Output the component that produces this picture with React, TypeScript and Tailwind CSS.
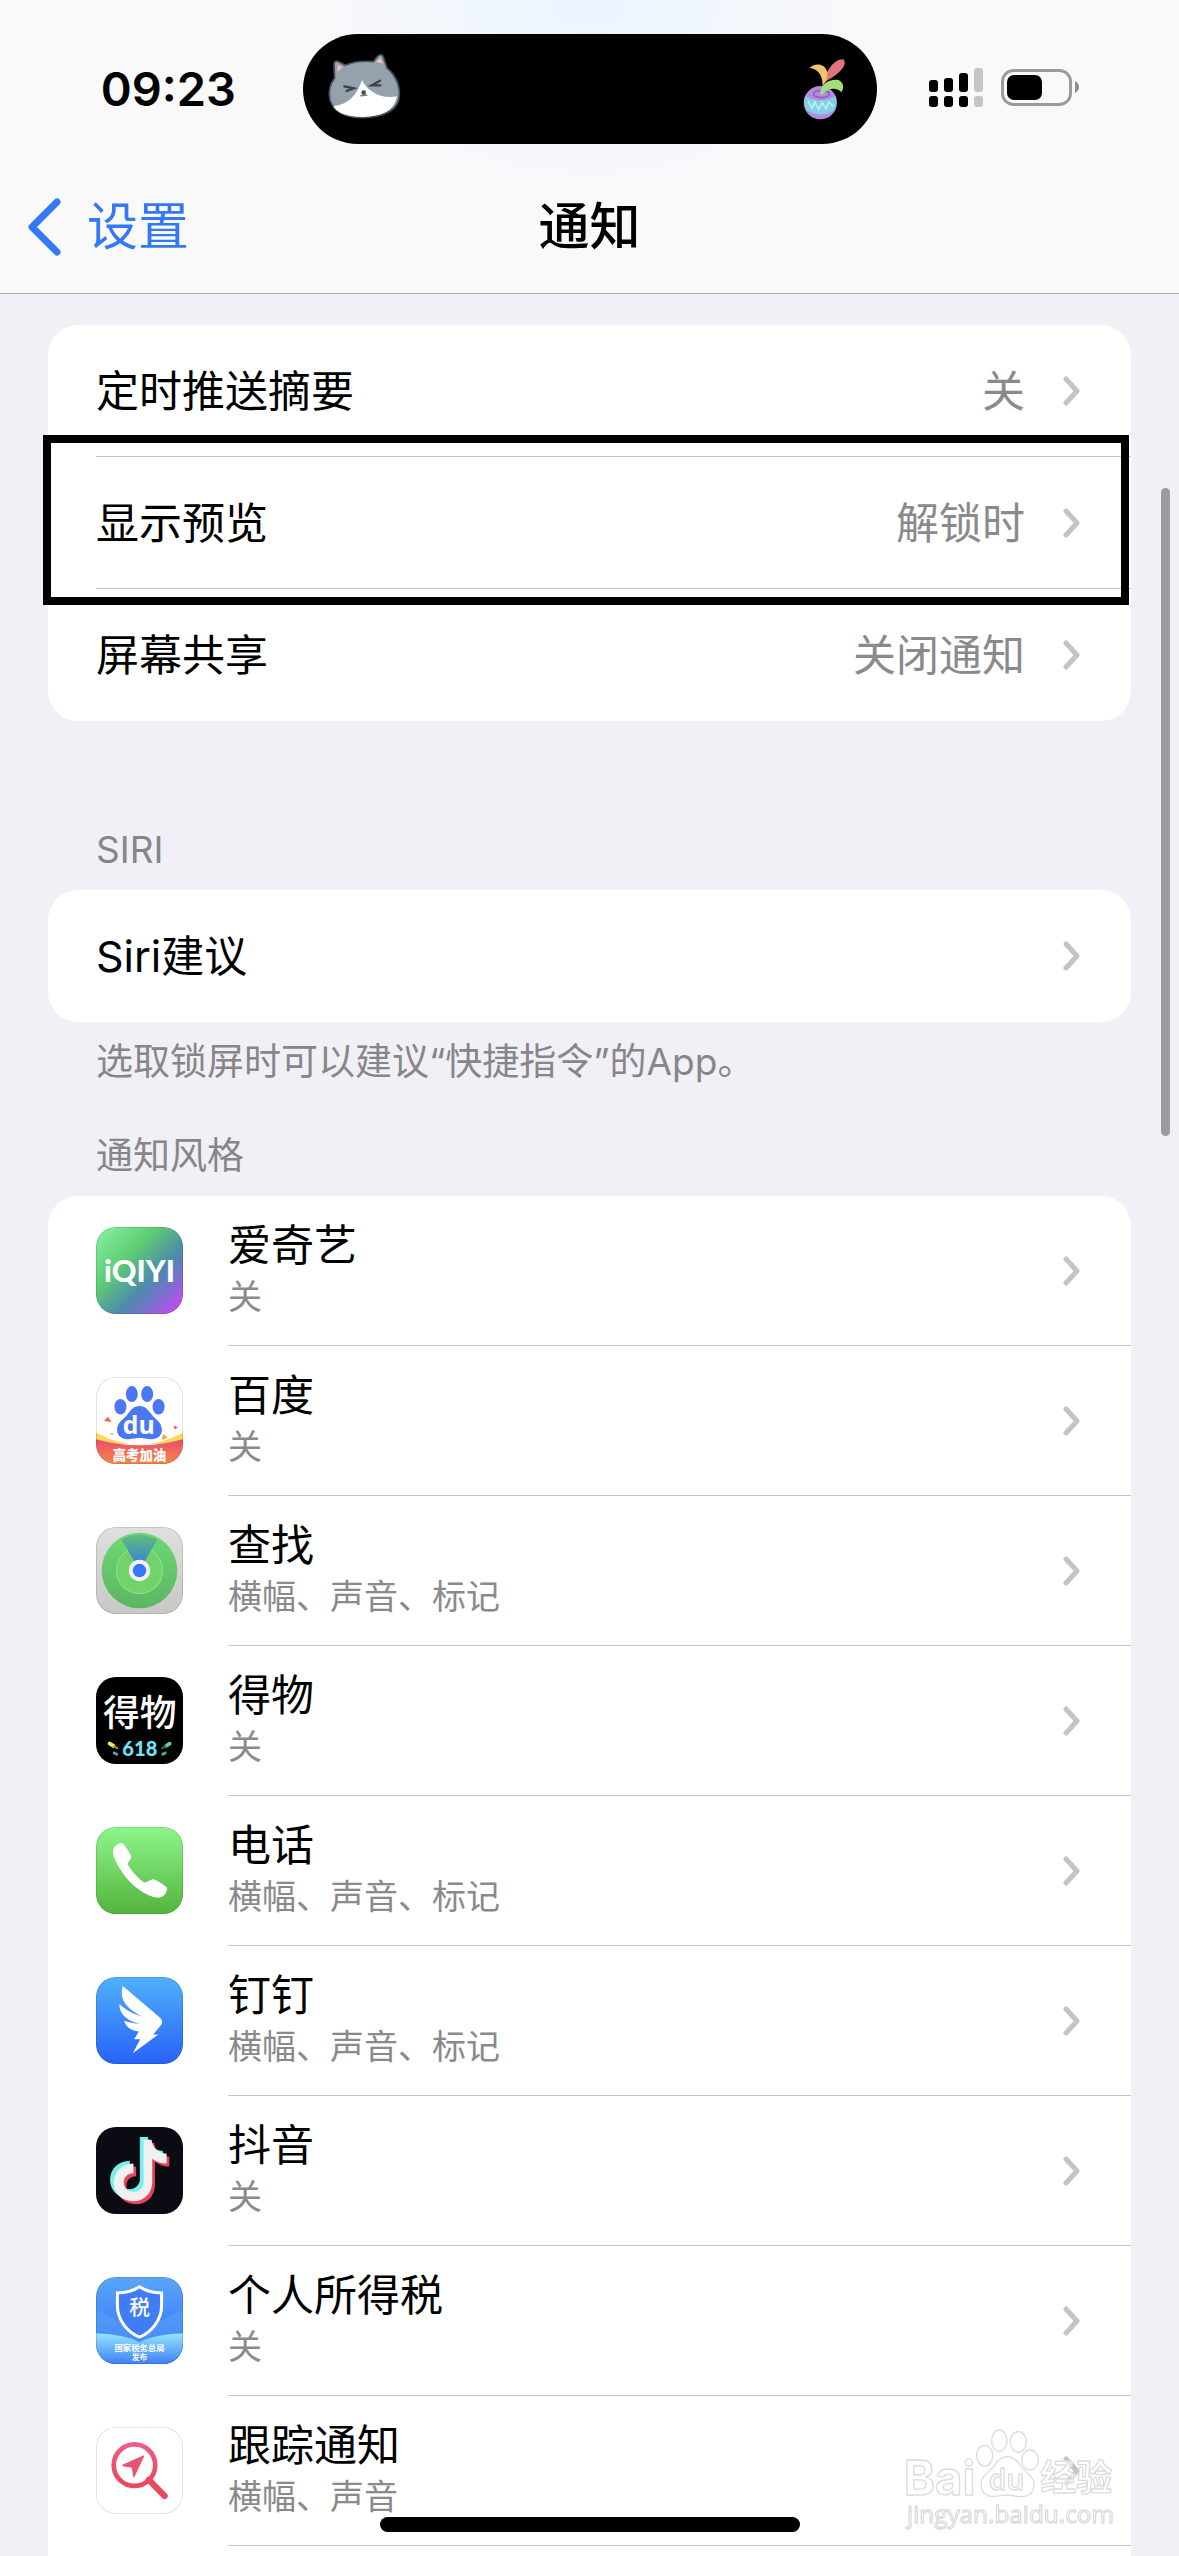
import type { ReactNode } from "react";

interface SettingItem {
  label: string;
  value?: string;
  highlighted?: boolean;
}

interface AppItem {
  name: string;
  detail: string;
  icon: ReactNode;
}

const settings: SettingItem[] = [
  { label: "定时推送摘要", value: "关" },
  { label: "显示预览", value: "解锁时", highlighted: true },
  { label: "屏幕共享", value: "关闭通知" },
];

const apps: AppItem[] = [
  { name: "爱奇艺", detail: "关", icon: <IqiyiIcon /> },
  { name: "百度", detail: "关", icon: <BaiduIcon /> },
  { name: "查找", detail: "横幅、声音、标记", icon: <FindIcon /> },
  { name: "得物", detail: "关", icon: <DewuIcon /> },
  { name: "电话", detail: "横幅、声音、标记", icon: <PhoneIcon /> },
  { name: "钉钉", detail: "横幅、声音、标记", icon: <DingTalkIcon /> },
  { name: "抖音", detail: "关", icon: <DouyinIcon /> },
  { name: "个人所得税", detail: "关", icon: <TaxIcon /> },
  { name: "跟踪通知", detail: "横幅、声音", icon: <TrackIcon /> },
];

const NOTE =
  "M142 38H166C168 61 186 78 211 80V109C194 109 180 104 168 95V164C168 198 142 222 112 222C78 222 53 198 53 166C53 134 78 109 112 109V138C94 138 83 150 83 166C83 182 96 194 111 194C127 194 142 182 142 164Z";

function Gradient({
  id,
  from,
  to,
}: {
  id: string;
  from: string;
  to: string;
}) {
  return (
    <linearGradient id={id} x1="0" y1="0" x2="0" y2="1">
      <stop offset="0" stopColor={from} />
      <stop offset="1" stopColor={to} />
    </linearGradient>
  );
}

function AppIcon({ children }: { children: ReactNode }) {
  return (
    <svg
      viewBox="0 0 260 260"
      className="size-[87px] rounded-[20px]"
      aria-hidden="true"
    >
      {children}
      <rect
        x="1"
        y="1"
        width="258"
        height="258"
        rx="59"
        fill="none"
        stroke="#000"
        strokeOpacity="0.14"
        strokeWidth="3"
      />
    </svg>
  );
}

function IqiyiIcon() {
  return (
    <AppIcon>
      <linearGradient id="iqiyi" x1="0" y1="0" x2="1" y2="1">
        <stop offset="0" stopColor="#86f3ab" />
        <stop offset="0.35" stopColor="#5fcd72" />
        <stop offset="0.62" stopColor="#4c8bac" />
        <stop offset="0.78" stopColor="#7f6cd0" />
        <stop offset="0.92" stopColor="#bb50ea" />
        <stop offset="1" stopColor="#c04cf0" />
      </linearGradient>
      <rect width="260" height="260" fill="url(#iqiyi)" />
      <text
        x="130"
        y="164"
        textAnchor="middle"
        fontSize="91"
        fill="#fff"
        className="font-['Lato',sans-serif] font-black"
      >
        iQIYI
      </text>
    </AppIcon>
  );
}

function BaiduIcon() {
  return (
    <AppIcon>
      <Gradient id="baidu" from="#ec4c6c" to="#f08a48" />
      <rect width="260" height="260" fill="#fff" />
      <g fill="#4a78f2">
        <ellipse cx="107" cy="51" rx="18" ry="24" />
        <ellipse cx="153" cy="51" rx="18" ry="24" />
        <ellipse cx="73" cy="89" rx="18" ry="23" />
        <ellipse cx="187" cy="89" rx="18" ry="23" />
        <path d="M130 87C112 87 104 100 92 114C80 128 63 136 63 158C63 178 80 188 98 186C112 184 120 182 130 182C140 182 148 184 162 186C180 188 197 178 197 158C197 136 180 128 168 114C156 100 148 87 130 87Z" />
      </g>
      <text
        x="128"
        y="170"
        textAnchor="middle"
        fontSize="74"
        fill="#fff"
        className="font-['Open_Sans',sans-serif] font-bold"
      >
        du
      </text>
      <path d="M36 118L24 131L46 135Z" fill="#ee6a4c" />
      <path d="M42 167L52 168L48 175Z" fill="#f4a83c" />
      <path d="M232 145L244 150L236 156Z" fill="#e8425c" />
      <path d="M200 170L215 181L197 188Z" fill="#f2a840" />
      <path d="M0 166Q130 238 260 166V200H0Z" fill="#fbd75c" />
      <path d="M0 186Q130 222 260 186V260H0Z" fill="url(#baidu)" />
      <text
        x="130"
        y="247"
        textAnchor="middle"
        fontSize="40"
        fill="#fff"
        className="font-['Noto_Sans_CJK_SC',sans-serif] font-black"
      >
        高考加油
      </text>
    </AppIcon>
  );
}

function FindIcon() {
  return (
    <AppIcon>
      <Gradient id="findBg" from="#dfdfdd" to="#c8c8c6" />
      <Gradient id="findRing" from="#6dd974" to="#5cb562" />
      <Gradient id="findBeam" from="#5fc07a" to="#2f72f0" />
      <rect width="260" height="260" fill="url(#findBg)" />
      <circle cx="130" cy="130" r="113" fill="url(#findRing)" />
      <circle
        cx="130"
        cy="130"
        r="69"
        fill="#73d26a"
        stroke="#7fe084"
        strokeWidth="4"
      />
      <path d="M130 130L77 38Q130 8 183 38Z" fill="url(#findBeam)" />
      <circle cx="130" cy="130" r="32" fill="#f1f0f6" />
      <circle cx="130" cy="130" r="20" fill="#3478f6" />
    </AppIcon>
  );
}

function DewuIcon() {
  return (
    <AppIcon>
      <rect width="260" height="260" fill="#000" />
      <text
        x="131"
        y="146"
        textAnchor="middle"
        fontSize="110"
        fill="#fff"
        className="font-['Noto_Sans_CJK_SC',sans-serif] font-medium"
      >
        得物
      </text>
      <text
        x="131"
        y="235"
        textAnchor="middle"
        fontSize="60"
        fill="#6fe3f8"
        className="font-['Lato',sans-serif] font-black"
      >
        618
      </text>
      <g fill="none" strokeLinecap="round">
        <path d="M41 199L52 206" stroke="#f8e84a" strokeWidth="12" />
        <path d="M54 207L64 213" stroke="#9a8f2c" strokeWidth="6" />
        <path d="M54 227L62 231" stroke="#4aa7b8" strokeWidth="8" />
        <path d="M220 199L209 206" stroke="#62cfa0" strokeWidth="11" />
        <path d="M207 207L197 213" stroke="#2f6b53" strokeWidth="6" />
        <path d="M207 227L199 231" stroke="#4aa7b8" strokeWidth="8" />
      </g>
    </AppIcon>
  );
}

function PhoneIcon() {
  return (
    <AppIcon>
      <Gradient id="phone" from="#8df68a" to="#53b43d" />
      <rect width="260" height="260" fill="url(#phone)" />
      <path
        d="M51 72C52 57 66 48 78 48C84 50 103 80 105 88C107 95 96 102 95 110C96 121 130 158 143 165C152 168 162 156 171 156C180 158 206 174 212 181C215 192 204 209 190 211C160 214 110 178 87 147C66 118 50 92 51 72Z"
        fill="#fff"
      />
    </AppIcon>
  );
}

function DingTalkIcon() {
  return (
    <AppIcon>
      <Gradient id="ding" from="#4fb0fa" to="#2862f8" />
      <rect width="260" height="260" fill="url(#ding)" />
      <path
        d="M80 27L190 120Q202 131 195 143L171 172H186L110 228L132 186H114L128 163C105 161 88 148 84 131C100 136 115 139 130 140C100 132 69 115 70 81C90 100 110 110 137 118C100 98 66 72 80 27Z"
        fill="#fff"
      />
    </AppIcon>
  );
}

function DouyinIcon() {
  return (
    <AppIcon>
      <rect width="260" height="260" fill="#0b0b14" />
      <path d={NOTE} fill="#74f0ee" transform="translate(-11 -8)" />
      <path d={NOTE} fill="#ea445c" transform="translate(8 9)" />
      <path d={NOTE} fill="#f0f0f0" />
    </AppIcon>
  );
}

function TaxIcon() {
  return (
    <AppIcon>
      <Gradient id="taxBg" from="#5aa6f7" to="#3069f6" />
      <Gradient id="taxBand" from="#92e6fc" to="#3f7ff8" />
      <rect width="260" height="260" fill="url(#taxBg)" />
      <path
        d="M0 100Q70 120 130 190Q190 120 260 100V200H0Z"
        fill="#63b2fa"
        fillOpacity="0.35"
      />
      <path
        d="M0 168Q90 172 130 195Q170 172 260 168V260H0Z"
        fill="url(#taxBand)"
      />
      <path
        d="M130 29C112 41 88 47 64 48V85C64 130 95 165 130 180C165 165 196 130 196 85V48C172 47 148 41 130 29Z"
        fill="#3f7cf5"
        stroke="#fff"
        strokeWidth="9"
      />
      <g
        textAnchor="middle"
        fill="#fff"
        className="font-['Noto_Sans_CJK_SC',sans-serif]"
      >
        <text x="130" y="115" fontSize="62" className="font-medium">
          税
        </text>
        <text x="130" y="222" fontSize="25" className="font-bold">
          国家税务总局
        </text>
        <text x="130" y="248" fontSize="23" className="font-bold">
          发布
        </text>
      </g>
    </AppIcon>
  );
}

function TrackIcon() {
  return (
    <AppIcon>
      <Gradient id="track" from="#ef5d86" to="#e9485c" />
      <rect width="260" height="260" fill="#fff" />
      <circle
        cx="115"
        cy="114"
        r="62"
        fill="none"
        stroke="url(#track)"
        strokeWidth="14"
      />
      <path
        d="M158 158L205 206"
        stroke="#e94a62"
        strokeWidth="19"
        strokeLinecap="round"
      />
      <path
        d="M142 87L80 115L109 120L113 148Z"
        fill="#eb5272"
        stroke="#eb5272"
        strokeWidth="4"
        strokeLinejoin="round"
      />
    </AppIcon>
  );
}

function Chevron() {
  return (
    <svg viewBox="0 0 17 30" className="h-[30px] w-[17px] shrink-0" aria-hidden="true">
      <path
        d="M3 3L14 15L3 27"
        fill="none"
        stroke="#c4c4c7"
        strokeWidth="5"
        strokeLinecap="round"
        strokeLinejoin="round"
      />
    </svg>
  );
}

function CatFace() {
  return (
    <svg viewBox="0 0 270 270" className="size-[90px]" aria-hidden="true">
      <path
        d="M44 102L42 60Q44 49 53 52L76 64Q112 48 160 53L174 36Q182 28 189 37L201 72Q240 106 238 155Q234 216 130 221Q48 222 30 168Q22 130 44 102Z"
        fill="#95a2ae"
        stroke="#46525d"
        strokeWidth="5"
      />
      <path d="M52 84L53 62L67 70Z" fill="#f3c2bd" />
      <path d="M168 53L181 41L189 59Z" fill="#f3c2bd" />
      <path
        d="M40 186C82 184 112 152 126 108C142 142 182 166 231 157C222 204 182 217 130 219C80 219 50 206 40 186Z"
        fill="#fff"
      />
      <path
        d="M73 127L101 133L80 141M180 110L155 124L181 124"
        fill="none"
        stroke="#3b4046"
        strokeWidth="7"
        strokeLinecap="round"
      />
      <circle cx="131" cy="146" r="7" fill="#45494e" />
      <path
        d="M121 154Q127 157 131 153Q136 156 142 152"
        fill="none"
        stroke="#777"
        strokeWidth="4"
      />
    </svg>
  );
}

function Sprout() {
  return (
    <svg viewBox="0 0 210 270" className="h-[90px] w-[70px]" aria-hidden="true">
      <circle cx="91" cy="176" r="50" fill="#b48ae2" />
      <path d="M46 156Q91 182 136 156Q144 178 132 201Q92 222 50 201Q38 178 46 156Z" fill="#83cfe4" />
      <path
        d="M54 172L66 192L74 174L86 196L96 176L108 194L116 174L130 188"
        fill="none"
        stroke="#b5ecf2"
        strokeWidth="6"
      />
      <ellipse cx="94" cy="150" rx="24" ry="11" fill="none" stroke="#9062c4" strokeWidth="5" />
      <path d="M100 114C108 82 132 44 160 46C172 58 160 84 104 114Z" fill="#e0737c" />
      <path d="M58 72C84 48 126 66 108 112L98 126C98 104 92 76 58 72Z" fill="#ecc66a" />
      <path d="M90 152C92 118 118 104 146 108C162 116 162 134 154 145C142 128 112 132 100 150Z" fill="#a5de78" />
    </svg>
  );
}

function SignalIcon() {
  return (
    <svg viewBox="0 0 54 46" className="h-[46px] w-[54px]" aria-hidden="true">
      <rect x="0" y="14" width="9" height="12" rx="3" />
      <rect x="15" y="12" width="9" height="14" rx="3" />
      <rect x="30" y="7" width="9" height="19" rx="3" />
      <rect x="45" y="2" width="9" height="24" rx="3" fill="#c5c5c5" />
      <rect x="0" y="30" width="9" height="11" rx="3" />
      <rect x="15" y="30" width="9" height="11" rx="3" />
      <rect x="30" y="30" width="9" height="11" rx="3" />
      <rect x="45" y="30" width="9" height="11" rx="3" fill="#c5c5c5" />
    </svg>
  );
}

function BatteryIcon() {
  return (
    <svg viewBox="0 0 78 40" className="h-10 w-[78px]" aria-hidden="true">
      <rect
        x="1.5"
        y="1.5"
        width="68"
        height="34"
        rx="11"
        fill="none"
        stroke="#9b9b9b"
        strokeWidth="3"
      />
      <rect x="6" y="6" width="35" height="25" rx="7" />
      <path d="M74 12Q78 14 78 18Q78 22 74 24Z" fill="#8d8d8d" />
    </svg>
  );
}

function Watermark() {
  return (
    <svg
      viewBox="363 195 660 330"
      className="pointer-events-none fixed right-[59px] bottom-[21px] h-[110px] w-[220px]"
      aria-hidden="true"
    >
      <g
        fill="#fff"
        fillOpacity="0.6"
        stroke="#dcdcdc"
        strokeWidth="4"
        strokeLinejoin="round"
      >
        <text
          x="374"
          y="406"
          fontSize="142"
          className="font-['Inter',sans-serif] font-bold"
        >
          Bai
        </text>
        <ellipse cx="617" cy="287" rx="24" ry="31" />
        <ellipse cx="661" cy="242" rx="23" ry="32" />
        <ellipse cx="718" cy="246" rx="24" ry="31" />
        <ellipse cx="753" cy="300" rx="25" ry="30" />
        <path d="M685 290C664 290 654 306 642 322C628 338 606 348 606 374C606 400 626 412 648 409C664 407 674 405 686 405C698 405 708 410 724 410C746 411 765 400 765 374C765 348 742 338 728 322C716 306 706 290 685 290Z" />
        <text
          x="683"
          y="390"
          textAnchor="middle"
          fontSize="84"
          className="font-['Open_Sans',sans-serif] font-semibold"
        >
          du
        </text>
        <text
          x="784"
          y="394"
          fontSize="108"
          className="font-['Noto_Sans_CJK_SC',sans-serif] font-bold"
        >
          经验
        </text>
        <text
          x="384"
          y="489"
          fontSize="73"
          className="font-['Open_Sans',sans-serif]"
        >
          jingyan.baidu.com
        </text>
      </g>
    </svg>
  );
}

function SectionTitle({ children }: { children: ReactNode }) {
  return (
    <h2 className="px-12 pb-4 text-[37px] leading-[48px] text-[#87868b]">
      {children}
    </h2>
  );
}

function SettingRow({ label, value, highlighted }: SettingItem) {
  return (
    <li className="group relative pl-12">
      <a
        href="#"
        className="flex items-center border-b border-[#c6c6c8] pt-11 pr-[51px] pb-[43px] text-[43px] leading-[44px] group-last:border-transparent"
      >
        <span className="flex-1">{label}</span>
        {value && <span className="pr-[38px] text-[#8a8a8d]">{value}</span>}
        <Chevron />
      </a>
      {highlighted && (
        <div className="pointer-events-none absolute -top-[22px] right-[2px] -bottom-4 -left-[5px] z-10 border-8 border-black" />
      )}
    </li>
  );
}

function AppRow({ name, detail, icon }: AppItem) {
  return (
    <li>
      <a href="#" className="flex gap-[45px] pl-12">
        <div className="pt-[31px] pb-8">{icon}</div>
        <div className="flex flex-1 items-center border-b border-[#c6c6c8] pr-[51px]">
          <div className="flex-1 leading-[52px]">
            <div className="text-[43px]">{name}</div>
            <div className="text-[34px] text-[#8a8a8d]">{detail}</div>
          </div>
          <Chevron />
        </div>
      </a>
    </li>
  );
}

export default function App() {
  return (
    <div className="flex min-h-screen flex-col bg-[#f1f0f6] font-['Inter','Noto_Sans_CJK_SC',sans-serif] text-black">
      <header className="border-b border-[#a9a9ae] bg-[#f9f9fa] bg-[radial-gradient(ellipse_280px_200px_at_50%_0,#eaf4ff,transparent)]">
        {/* Status bar */}
        <div className="grid grid-cols-[1fr_574px_1fr] items-center pt-[34px]">
          <div className="pl-[34px] text-center text-[47px] leading-[52px] font-semibold">
            09:23
          </div>
          <div className="flex h-[110px] items-center justify-between rounded-full bg-black px-[17px]">
            <CatFace />
            <Sprout />
          </div>
          <div className="flex items-center gap-[18px] pl-[52px]">
            <SignalIcon />
            <BatteryIcon />
          </div>
        </div>

        {/* Navigation */}
        <nav className="grid grid-cols-3 items-center px-7 pt-[53px] pb-9 text-[51px] leading-[60px]">
          <a href="#" className="flex items-center gap-[26px] text-[#3478f6]">
            <svg viewBox="0 0 33 58" className="h-[58px] w-[33px]" aria-hidden="true">
              <path
                d="M29 4L4 29L29 54"
                fill="none"
                stroke="currentColor"
                strokeWidth="7"
                strokeLinecap="round"
                strokeLinejoin="round"
              />
            </svg>
            设置
          </a>
          <h1 className="text-center font-medium">通知</h1>
        </nav>
      </header>

      <main className="flex flex-1 flex-col px-12 pt-[31px]">
        <ul className="rounded-[30px] bg-white">
          {settings.map((item) => (
            <SettingRow key={item.label} {...item} />
          ))}
        </ul>

        <section className="pt-[105px]">
          <SectionTitle>SIRI</SectionTitle>
          <ul className="rounded-[30px] bg-white">
            <SettingRow label="Siri建议" />
          </ul>
          <p className="px-12 pt-4 text-[37px] leading-[48px] text-[#87868b]">
            选取锁屏时可以建议“快捷指令”的App。
          </p>
        </section>

        <section className="flex flex-1 flex-col pt-[46px]">
          <SectionTitle>通知风格</SectionTitle>
          <ul className="flex-1 rounded-t-[30px] bg-white">
            {apps.map((app) => (
              <AppRow key={app.name} {...app} />
            ))}
          </ul>
        </section>
      </main>

      {/* Scroll thumb */}
      <div className="fixed top-[488px] right-[9px] h-[648px] w-[9px] rounded-full bg-[#9c9c9f]" />
      <Watermark />
      {/* Home indicator */}
      <div className="fixed bottom-6 left-1/2 h-[15px] w-[420px] -translate-x-1/2 rounded-full bg-black" />
    </div>
  );
}
